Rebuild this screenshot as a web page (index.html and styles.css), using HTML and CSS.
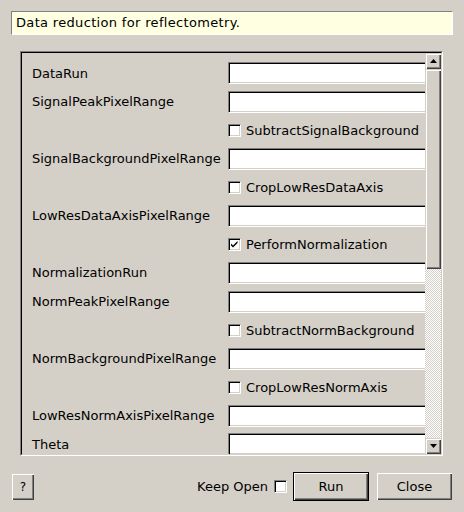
FILE: index.html
```html
<!DOCTYPE html>
<html>
<head>
<meta charset="utf-8">
<link rel="stylesheet" href="styles.css">
</head>
<body>
<div class="dialog">
  <div class="desc">Data reduction for reflectometry.</div>
  <div class="frame">
    <div class="frame-inner">
      <div class="viewport">
        <div class="form">
          <div class="lbl">DataRun</div><div class="field"></div>
          <div class="lbl">SignalPeakPixelRange</div><div class="field"></div>
          <div></div><div class="chk"><span class="box"></span>SubtractSignalBackground</div>
          <div class="lbl">SignalBackgroundPixelRange</div><div class="field"></div>
          <div></div><div class="chk"><span class="box"></span>CropLowResDataAxis</div>
          <div class="lbl">LowResDataAxisPixelRange</div><div class="field"></div>
          <div></div><div class="chk"><span class="box"><svg width="11" height="11" viewBox="0 0 11 11"><path d="M2 4.5 L4 6.5 L8.5 2 L8.5 4 L4 8.5 L2 6.5 Z" fill="#000"/></svg></span>PerformNormalization</div>
          <div class="lbl">NormalizationRun</div><div class="field"></div>
          <div class="lbl">NormPeakPixelRange</div><div class="field"></div>
          <div></div><div class="chk"><span class="box"></span>SubtractNormBackground</div>
          <div class="lbl">NormBackgroundPixelRange</div><div class="field"></div>
          <div></div><div class="chk"><span class="box"></span>CropLowResNormAxis</div>
          <div class="lbl">LowResNormAxisPixelRange</div><div class="field"></div>
          <div class="lbl">Theta</div><div class="field"></div>
        </div>
      </div>
      <div class="scrollbar">
        <div class="sb-btn"><svg width="7" height="4" viewBox="0 0 7 4"><path d="M3.5 0 L7 4 L0 4 Z" fill="#000"/></svg></div>
        <div class="sb-thumb"></div>
        <div class="sb-track"></div>
        <div class="sb-btn"><svg width="7" height="4" viewBox="0 0 7 4"><path d="M0 0 L7 0 L3.5 4 Z" fill="#000"/></svg></div>
      </div>
    </div>
  </div>
  <div class="bottom">
    <div class="btn help">?</div>
    <div class="right">
      <span class="keep">Keep Open</span>
      <span class="box"></span>
      <div class="btn run">Run</div>
      <div class="btn close">Close</div>
    </div>
  </div>
</div>
</body>
</html>
```
FILE: styles.css
```css
html, body {
  margin: 0;
  padding: 0;
}
body {
  background: #d4d0c8;
  font-family: "DejaVu Sans", sans-serif;
  font-size: 13px;
  color: #000;
  width: 464px;
  height: 512px;
  overflow: hidden;
}
.dialog {
  padding-top: 11px;
}
.desc {
  margin: 0 11px;
  height: 24px;
  box-sizing: border-box;
  background: #ffffe1;
  border-top: 1px solid #808080;
  border-left: 1px solid #808080;
  border-bottom: 1px solid #fff;
  border-right: 1px solid #fff;
  padding-left: 4px;
  line-height: 22px;
  letter-spacing: 0.33px;
  white-space: nowrap;
}
.frame {
  margin: 16px 21px 0 20px;
  height: 405px;
  box-sizing: border-box;
  border-top: 1px solid #808080;
  border-left: 1px solid #808080;
  border-bottom: 1px solid #fff;
  border-right: 1px solid #fff;
}
.frame-inner {
  height: 100%;
  box-sizing: border-box;
  border-top: 1px solid #000;
  border-left: 1px solid #000;
  border-bottom: 1px solid #d4d0c8;
  border-right: 1px solid #d4d0c8;
  display: flex;
}
.viewport {
  flex: 1;
  overflow: hidden;
  padding: 9px 0 0 10px;
}
.form {
  display: grid;
  grid-template-columns: 196px 200px;
  grid-auto-rows: 22px;
  row-gap: 6.57px;
  align-items: center;
  white-space: nowrap;
}
.field {
  height: 22px;
  box-sizing: border-box;
  background: #fff;
  border-top: 1px solid #808080;
  border-left: 1px solid #808080;
  border-bottom: 1px solid #fff;
  border-right: 1px solid #fff;
  box-shadow: inset 1px 1px 0 #000, inset -1px -1px 0 #d4d0c8;
}
.chk {
  display: flex;
  align-items: center;
  gap: 5px;
}
.box {
  width: 13px;
  height: 13px;
  box-sizing: border-box;
  background: #fff;
  border-top: 1px solid #808080;
  border-left: 1px solid #808080;
  border-bottom: 1px solid #fff;
  border-right: 1px solid #fff;
  box-shadow: inset 1px 1px 0 #000, inset -1px -1px 0 #d4d0c8;
  display: flex;
  align-items: center;
  justify-content: center;
  flex: none;
}
.box svg {
  display: block;
}
.scrollbar {
  width: 16px;
  display: flex;
  flex-direction: column;
}
.sb-btn, .sb-thumb {
  background: #d4d0c8;
  box-shadow: inset 1px 1px 0 #d4d0c8, inset 2px 2px 0 #fff, inset -1px -1px 0 #404040, inset -2px -2px 0 #808080;
}
.sb-btn {
  height: 16px;
  display: flex;
  align-items: center;
  justify-content: center;
  flex: none;
}
.sb-thumb {
  height: 200px;
  flex: none;
}
.sb-track {
  flex: 1;
  background: repeating-conic-gradient(#fff 0 25%, #d4d0c8 0 50%) 0 0 / 2px 2px;
}
.bottom {
  margin-top: 16px;
  padding: 0 12px;
  height: 29px;
  display: flex;
  align-items: center;
}
.right {
  margin-left: auto;
  display: flex;
  align-items: center;
}
.keep {
  margin-right: 6px;
}
.right .box {
  margin-right: 6px;
}
.btn {
  box-sizing: border-box;
  background: #d4d0c8;
  box-shadow: inset 1px 1px 0 #fff, inset -1px -1px 0 #404040, inset -2px -2px 0 #808080;
  display: flex;
  align-items: center;
  justify-content: center;
}
.help {
  width: 22px;
  height: 26px;
  font-size: 12px;
}
.run {
  width: 76px;
  height: 29px;
  border: 1px solid #000;
  margin-right: 8px;
}
.close {
  width: 75px;
  height: 27px;
}
```
